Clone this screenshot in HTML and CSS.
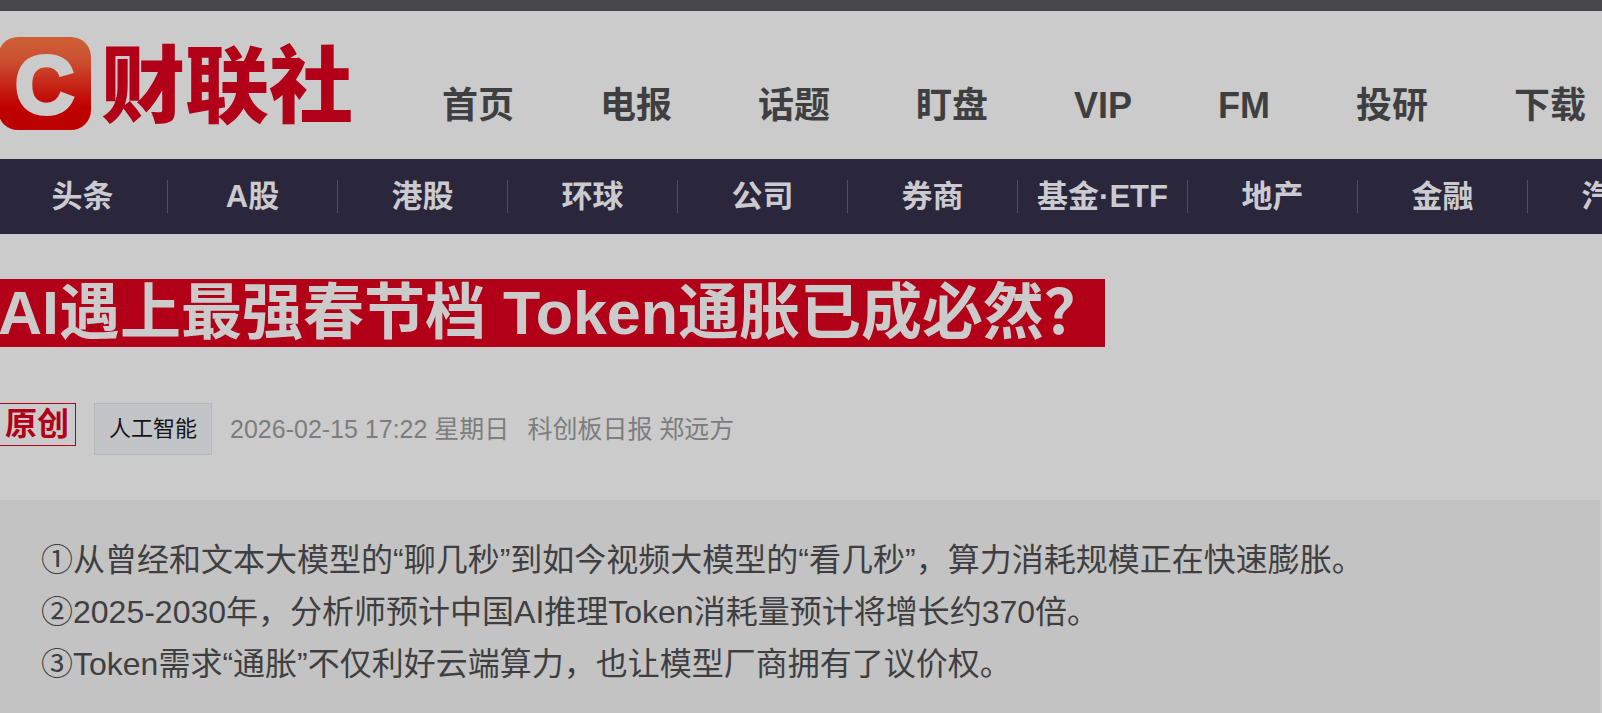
FILE: index.html
```html
<!DOCTYPE html>
<html lang="zh-CN">
<head>
  <meta charset="utf-8">
  <title>AI遇上最强春节档 Token通胀已成必然？</title>
  <link rel="stylesheet" href="styles.css">
</head>
<body>
  <div class="topbar"></div>

  <header class="header">
    <a class="logo" href="#" aria-label="财联社">
      <svg width="358" height="93" viewBox="0 0 358 93">
        <defs>
          <linearGradient id="logobg" x1="0" y1="0" x2="0" y2="1">
            <stop offset="0" stop-color="#cd6034"/>
            <stop offset="0.25" stop-color="#cc5030"/>
            <stop offset="0.75" stop-color="#c00000"/>
            <stop offset="1" stop-color="#bc0000"/>
          </linearGradient>
        </defs>
        <rect width="93" height="93" rx="20" fill="url(#logobg)"/>
        <text class="logo-letter" x="17" y="76">C</text>
        <text class="logo-name" x="103" y="79">财联社</text>
      </svg>
    </a>
    <nav class="mainnav">
      <a href="#">首页</a>
      <a href="#">电报</a>
      <a href="#">话题</a>
      <a href="#">盯盘</a>
      <a href="#">VIP</a>
      <a href="#">FM</a>
      <a href="#">投研</a>
      <a href="#">下载</a>
    </nav>
  </header>

  <nav class="subnav">
    <a href="#">头条</a>
    <a href="#">A股</a>
    <a href="#">港股</a>
    <a href="#">环球</a>
    <a href="#">公司</a>
    <a href="#">券商</a>
    <a href="#">基金·ETF</a>
    <a href="#">地产</a>
    <a href="#">金融</a>
    <a href="#">汽车</a>
  </nav>

  <main class="article">
    <h1 class="title"><span>AI遇上最强春节档 Token通胀已成必然？</span></h1>
    <div class="info">
      <span class="original">原创</span>
      <a class="tag" href="#">人工智能</a>
      <span class="date">2026-02-15 17:22 星期日</span>
      <span class="author">科创板日报 郑远方</span>
    </div>
    <div class="summary">
      <p>①从曾经和文本大模型的“聊几秒”到如今视频大模型的“看几秒”，算力消耗规模正在快速膨胀。</p>
      <p>②2025-2030年，分析师预计中国AI推理Token消耗量预计将增长约370倍。</p>
      <p>③Token需求“通胀”不仅利好云端算力，也让模型厂商拥有了议价权。</p>
    </div>
  </main>
</body>
</html>
```
FILE: styles.css
```css
body {
  margin: 0;
  background-color: #cbcbcb;
  color: #3f3f41;
  font-family: "Liberation Sans", "Noto Sans CJK SC", sans-serif;
  overflow: hidden;
}

a {
  color: inherit;
  text-decoration: none;
}

.topbar {
  height: 11px;
  background-color: #474649;
}

/* Logo and main menu */
.header {
  display: flex;
  height: 148px;
  margin-left: -2px;
}

.logo {
  flex: none;
  padding-top: 26px;
}

.logo svg {
  display: block;
  overflow: visible;
}

.logo-letter {
  font-size: 82px;
  font-weight: bold;
  fill: #cbcbcb;
  stroke: #cbcbcb;
  stroke-width: 4px;
}

.logo-name {
  font-family: "Noto Sans CJK SC", sans-serif;
  font-size: 84px;
  font-weight: 900;
  fill: #b30019;
}

.mainnav {
  display: flex;
  gap: 86px;
  padding: 68px 0 0 86px;
  font-size: 36px;
  font-weight: bold;
  line-height: 54px;
  white-space: nowrap;
}

/* Channel menu */
.subnav {
  display: flex;
  align-items: center;
  height: 75px;
  margin-left: -2px;
  overflow: hidden;
  background-color: #2a263b;
}

.subnav a {
  flex: none;
  box-sizing: border-box;
  width: 170px;
  border-right: 1px solid #504d5e;
  color: #cbcbcf;
  font-size: 31px;
  font-weight: bold;
  line-height: 33px;
  text-align: center;
}

/* Article */
.article {
  margin: 45px 2px 0 -2px;
}

.title {
  margin: 0;
  font-size: 61px;
  line-height: 68px;
  color: #cbcbcb;
}

.title span {
  display: inline-block;
  background-color: #b10018;
}

.info {
  display: flex;
  align-items: flex-start;
  gap: 18px;
  margin: 56px 0 45px;
  color: #7d7d7d;
  font-size: 25px;
  line-height: 52px;
}

.original {
  padding: 0 6px;
  border: 1px solid #b10018;
  color: #b10018;
  font-size: 32px;
  font-weight: bold;
  line-height: 41px;
}

.tag {
  padding: 0 14px;
  border: 1px solid #b7b8ba;
  background-color: #c3c4c8;
  color: #141417;
  font-size: 22px;
  line-height: 50px;
}

.summary {
  padding: 34px 43px;
  background-color: #c3c3c3;
  font-size: 32px;
  line-height: 52px;
}

.summary p {
  margin: 0;
}
```
